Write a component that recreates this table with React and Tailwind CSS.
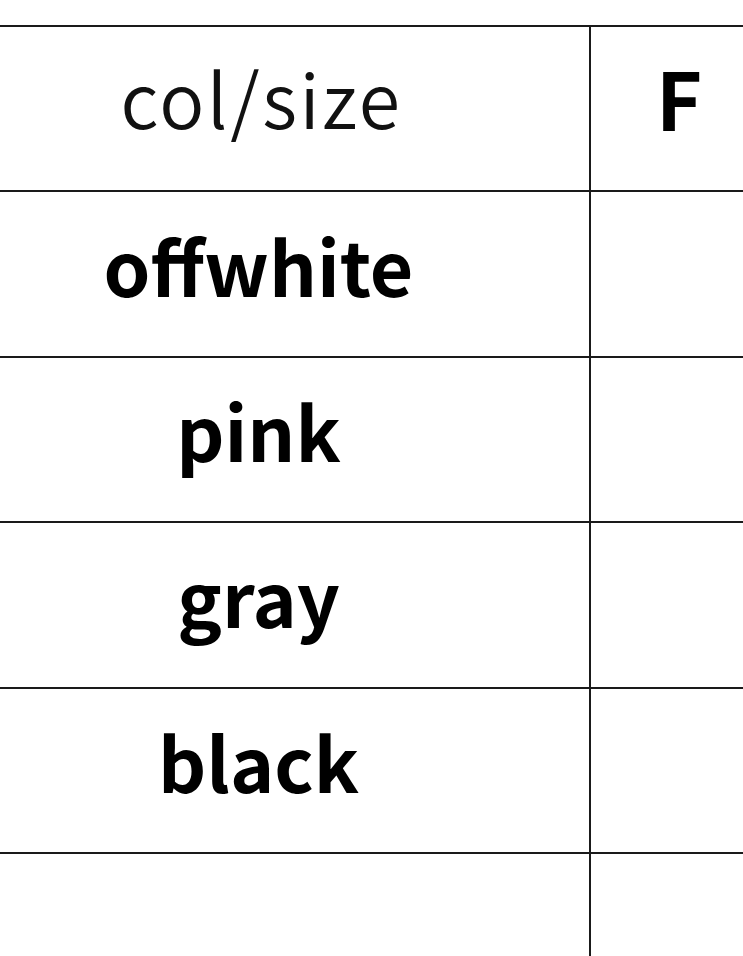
const rows = [
  { label: 'offwhite', h: 'h-[166px]' },
  { label: 'pink', h: 'h-[165px]' },
  { label: 'gray', h: 'h-[166px]' },
  { label: 'black', h: 'h-[165px]' },
  { label: '', h: 'h-[120px]' },
];

function App() {
  return (
    <div
      className="w-[743px] h-[956px] overflow-hidden bg-white pt-[25px] text-black"
      style={{ fontFamily: '"Noto Sans CJK JP", "Noto Sans", sans-serif' }}
    >
      <div className="w-[780px] border-t-2 border-[#1a1a1a]">
        {/* header */}
        <div className="flex h-[165px] border-b-2 border-[#1a1a1a]">
          <div className="w-[591px] shrink-0 border-r-2 border-[#1a1a1a] pr-[66px] flex items-center justify-center pb-[24px]">
            <span className="text-[75px] font-[350] leading-none tracking-[2.5px] text-[#111]">col/size</span>
          </div>
          <div className="w-[176px] shrink-0 flex items-center justify-center pb-[24px]">
            <span className="text-[79px] font-bold leading-none">F</span>
          </div>
        </div>

        {rows.map((row, i) => (
          <div
            key={i}
            className={`flex ${row.h} ${row.label ? 'border-b-2 border-[#1a1a1a]' : ''}`}
          >
            <div className="w-[591px] shrink-0 border-r-2 border-[#1a1a1a] pr-[72px] flex items-center justify-center pb-[20px]">
              <span className="text-[75px] font-bold leading-none">{row.label}</span>
            </div>
            <div className="w-[176px] shrink-0" />
          </div>
        ))}
      </div>
    </div>
  );
}

export default App;
